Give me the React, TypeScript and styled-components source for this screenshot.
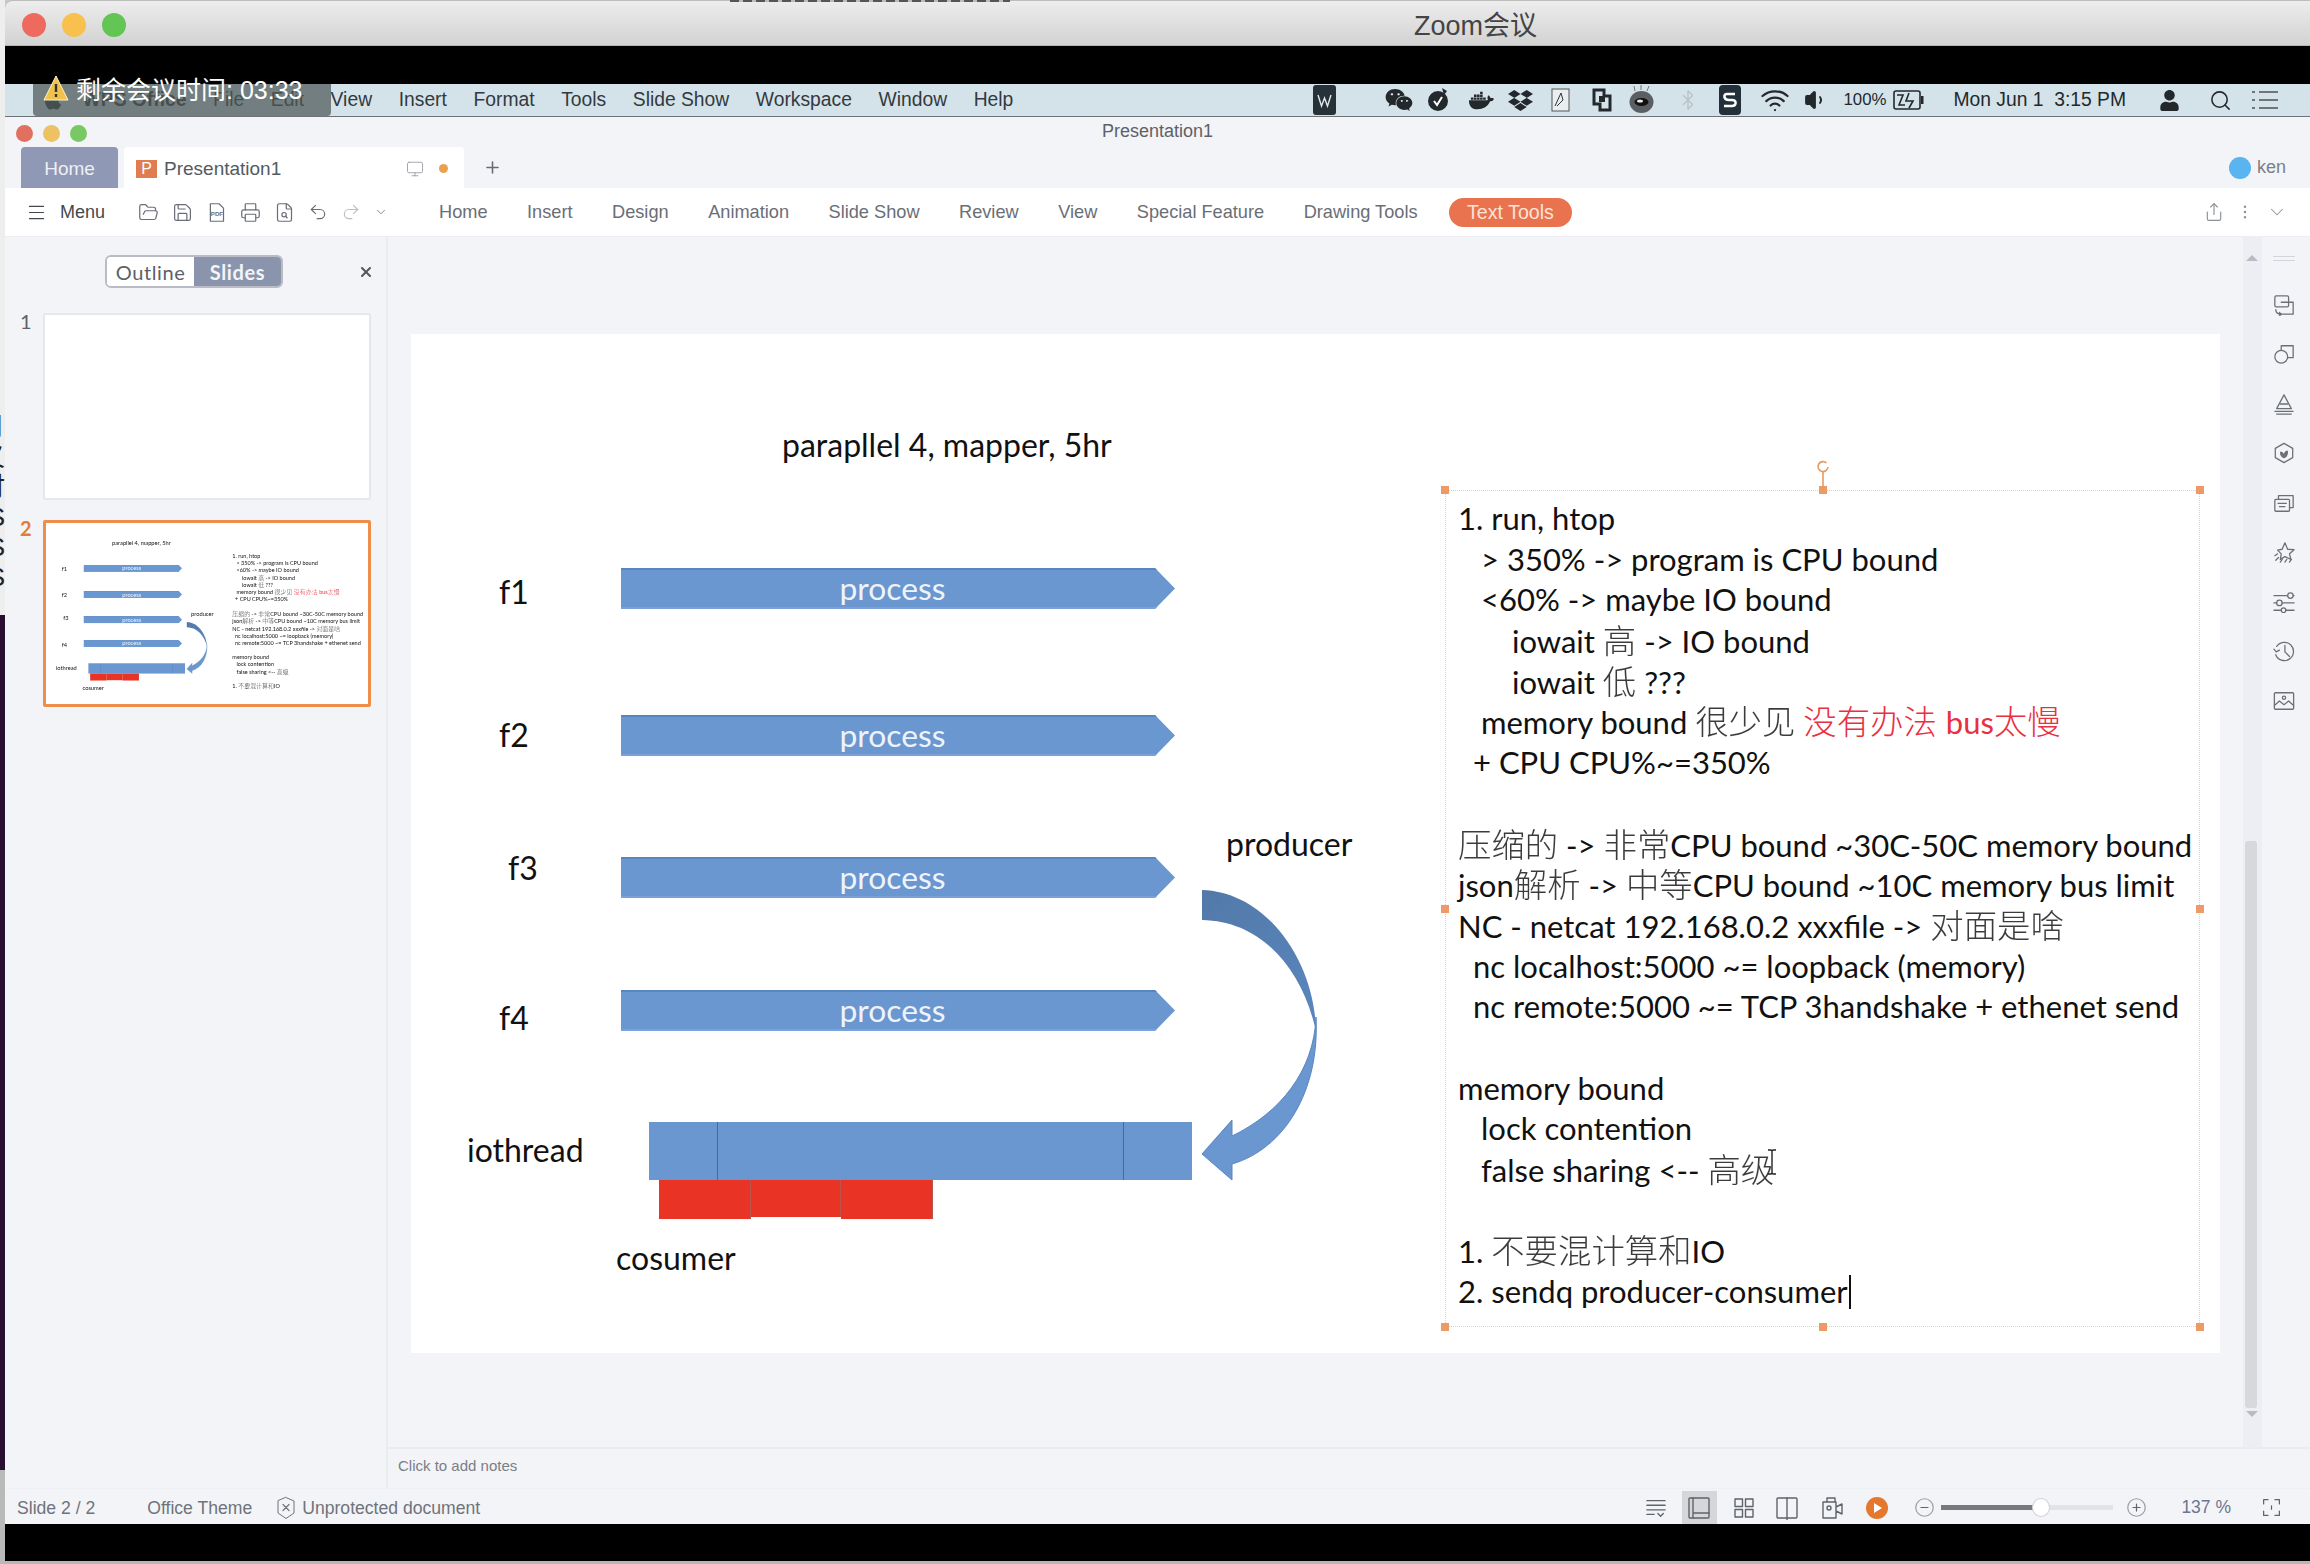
import React from 'react'
import styled, { createGlobalStyle } from 'styled-components'
import { FaWeixin, FaDocker, FaDropbox, FaUser, FaApple } from 'react-icons/fa'
import {
  Menu as MenuIcon,
  FolderOpen,
  Save,
  Printer,
  FileSearch,
  Undo2,
  Redo2,
  Monitor,
  Plus,
  Share,
  ChevronDown,
  EllipsisVertical,
  X,
  Wifi,
  Volume1,
  Search,
  Bluetooth,
} from 'lucide-react'

const UI_FONT = '"Liberation Sans", "Noto Sans CJK SC", sans-serif'
const SLIDE_FONT = 'Lato, "Noto Sans CJK SC", sans-serif'

const GlobalStyle = createGlobalStyle`
  html, body { margin: 0; padding: 0; background: #000; }
  * { box-sizing: border-box; }
`

const Page = styled.div`
  display: flex;
  width: 2310px;
  height: 1564px;
  overflow: hidden;
  background: #c8c8c8;
  font-family: ${UI_FONT};
`

/* sliver of the desktop behind the zoom window */
const Desktop = styled.div`
  display: flex;
  flex-direction: column;
  width: 5px;
  flex: none;
`
const DesktopLight = styled.div`
  height: 615px;
  padding-top: 412px;
  background: #eeeeee;
  overflow: hidden;
`
const DesktopGlyphs = styled.div`
  margin-left: -25px;
  width: 30px;
  text-align: right;
  font-size: 26px;
  line-height: 30px;
  color: #222;
`
const DesktopDark = styled.div`
  flex: 1;
  background: #2b0f33;
`
const DesktopGray = styled.div`
  height: 94px;
  background: #b9b9b9;
`

const ZoomWindow = styled.div`
  position: relative;
  flex: 1;
  display: flex;
  flex-direction: column;
  min-width: 0;
`
const DesktopSliver = styled.div`
  position: absolute;
  top: 0;
  left: 725px;
  width: 280px;
  height: 2px;
  background: repeating-linear-gradient(90deg, #555 0 9px, #bbb 9px 13px);
`
const TitleBar = styled.div`
  display: flex;
  align-items: center;
  height: 46px;
  padding-top: 3px;
  padding-left: 17px;
  background: linear-gradient(#ededed, #d2d2d2);
  border-top: 1px solid #bdbdbd;
  border-bottom: 1px solid #b4b4b4;
  border-top-left-radius: 8px;
`
const Lights = styled.div<{ $gap: number }>`
  display: flex;
  gap: ${(p) => p.$gap}px;
`
const Light = styled.span<{ $c: string; $d: number }>`
  width: ${(p) => p.$d}px;
  height: ${(p) => p.$d}px;
  border-radius: 50%;
  background: ${(p) => p.$c};
`
const ZoomTitle = styled.div`
  margin-left: 1288px;
  margin-top: -3px;
  font-size: 27px;
  color: #444;
`
const BlackBand = styled.div<{ $h: number }>`
  height: ${(p) => p.$h}px;
  background: #000;
  flex: none;
`
const BottomEdge = styled.div`
  height: 3px;
  flex: none;
  background: #b7b7b7;
`
const MacMenuBar = styled.div`
  position: relative;
  display: flex;
  align-items: center;
  height: 32px;
  flex: none;
  background: #d4e3e9;
  font-size: 19.3px;
  color: #33393f;
`
const MacMenus = styled.div`
  display: flex;
  gap: 26.6px;
  padding-left: 37px;
`
const AppName = styled.span`
  font-weight: 700;
  margin-left: -8px;
`
const Tray = styled.div`
  position: absolute;
  top: 0;
  bottom: 0;
  left: 0;
  right: 0;
  display: flex;
  align-items: center;
  justify-content: flex-end;
  padding-right: 32px;
  color: #23282c;
`
const TraySlot = styled.span<{ $ml: number; $small?: boolean }>`
  display: flex;
  align-items: center;
  margin-left: ${(p) => p.$ml}px;
  font-size: ${(p) => (p.$small ? '16.8px' : 'inherit')};
`
const TimerBadge = styled.div`
  position: absolute;
  left: 28px;
  top: 0;
  width: 298px;
  height: 32px;
  background: rgba(78, 88, 88, 0.72);
  border-radius: 0 0 4px 4px;
`
const TimerText = styled.div`
  position: absolute;
  left: 38px;
  top: -14px;
  display: flex;
  align-items: center;
  gap: 7px;
  color: #fff;
  font-size: 25px;
  white-space: nowrap;
`

const AppWindow = styled.div`
  flex: 1;
  display: flex;
  flex-direction: column;
  min-height: 0;
  background: #f3f4f7;
  border-top: 1px solid #6d7478;
`
const AppTitleRow = styled.div`
  position: relative;
  display: flex;
  align-items: center;
  height: 30px;
  flex: none;
  padding-left: 11px;
  padding-top: 2px;
`
const AppTitle = styled.div`
  position: absolute;
  left: 0;
  right: 0;
  top: 4px;
  text-align: center;
  font-size: 18px;
  color: #5d6168;
`
const TabRow = styled.div`
  display: flex;
  align-items: stretch;
  height: 41px;
  flex: none;
  padding-left: 16px;
`
const HomeTab = styled.div`
  display: flex;
  align-items: center;
  justify-content: center;
  width: 97px;
  padding-top: 2px;
  background: #8f98b4;
  color: #eef0f5;
  font-size: 19px;
  border-radius: 4px 4px 0 0;
`
const DocTab = styled.div`
  display: flex;
  align-items: center;
  width: 340px;
  margin-left: 6px;
  padding: 2px 0 0 12px;
  background: #fff;
  color: #555a62;
  font-size: 19px;
  border-radius: 4px 4px 0 0;
`
const DocIcon = styled.span`
  display: flex;
  align-items: center;
  justify-content: center;
  width: 21px;
  height: 18px;
  margin-right: 7px;
  background: #e07c50;
  color: #fff;
  font-size: 16px;
`
const DocSpacer = styled.span`
  flex: 1;
`
const DocDot = styled.span`
  width: 9px;
  height: 9px;
  margin: 0 16px 0 15px;
  border-radius: 50%;
  background: #eba04f;
`
const AddTab = styled.div`
  display: flex;
  align-items: center;
  margin-left: 19px;
  color: #666b74;
`
const UserChip = styled.div`
  display: flex;
  align-items: center;
  gap: 6px;
  margin-left: auto;
  padding-right: 24px;
  font-size: 18px;
  color: #7a7f88;
`
const Avatar = styled.span`
  width: 22px;
  height: 22px;
  border-radius: 50%;
  background: #5ab4ef;
`

const Toolbar = styled.div`
  position: relative;
  display: flex;
  align-items: center;
  height: 49px;
  flex: none;
  padding-left: 21px;
  background: #fff;
  border-bottom: 1px solid #eceef2;
  color: #6a6e76;
`
const MenuButton = styled.div`
  display: flex;
  align-items: center;
  gap: 13px;
  width: 112px;
  color: #444950;
  font-size: 18px;
`
const QuickIcons = styled.div`
  display: flex;
  align-items: center;
  gap: 13px;
  width: 301px;
`
const RibbonTabs = styled.div`
  display: flex;
  align-items: center;
  gap: 39.5px;
  font-size: 18.2px;
`
const RibbonPill = styled.span`
  display: flex;
  align-items: center;
  height: 29px;
  padding: 0 18px;
  margin-left: -8px;
  border-radius: 15px;
  background: #e8734e;
  color: #fbe3da;
  font-size: 19.6px;
`
const ToolbarEnd = styled.div`
  display: flex;
  align-items: center;
  gap: 12px;
  margin-left: auto;
  padding-right: 22px;
  color: #8d9198;
`

const Body = styled.div`
  flex: 1;
  display: flex;
  min-height: 0;
`
const Sidebar = styled.div`
  width: 383px;
  flex: none;
  padding: 18px 0 0 17px;
  border-right: 2px solid #ebecf0;
`
const SidebarTop = styled.div`
  display: flex;
  align-items: center;
  margin-bottom: 25px;
  padding-left: 83px;
  color: #555;
`
const ViewToggle = styled.div`
  display: flex;
  width: 178px;
  height: 33px;
  border: 2px solid #b9bcc4;
  border-radius: 6px;
  overflow: hidden;
  font-family: Lato, sans-serif;
  font-size: 20px;
  letter-spacing: 0.6px;
`
const ToggleItem = styled.div<{ $active?: boolean }>`
  flex: 1;
  display: flex;
  align-items: center;
  justify-content: center;
  background: ${(p) => (p.$active ? '#8a94ad' : '#fff')};
  color: ${(p) => (p.$active ? '#f2f4f8' : '#5c6068')};
  font-weight: ${(p) => (p.$active ? 700 : 400)};
`
const SidebarClose = styled.div`
  display: flex;
  margin-left: 75px;
`
const ThumbRow = styled.div`
  display: flex;
  margin-bottom: 20px;
`
const ThumbNumber = styled.div<{ $active?: boolean }>`
  width: 21px;
  margin-top: -3px;
  text-indent: -2px;
  font-family: Lato, sans-serif;
  font-size: 20px;
  line-height: 22px;
  color: ${(p) => (p.$active ? '#e07c3c' : '#5e626a')};
  font-weight: ${(p) => (p.$active ? 700 : 400)};
`
const ThumbFrame = styled.div<{ $active?: boolean }>`
  position: relative;
  width: 328px;
  height: 187px;
  background: #fff;
  overflow: hidden;
  border: ${(p) => (p.$active ? '3px solid #ed8e4a' : '2px solid #e6e7ea')};
  border-radius: 2px;
`
const ThumbScale = styled.div`
  width: 1809px;
  transform: scale(0.178);
  transform-origin: 0 0;
  filter: blur(1.5px);
`

const Main = styled.div`
  flex: 1;
  display: flex;
  flex-direction: column;
  min-width: 0;
`
const CanvasRow = styled.div`
  flex: 1;
  display: flex;
  min-height: 0;
`
const Canvas = styled.div`
  flex: 1;
  padding: 97px 0 0 23px;
  min-width: 0;
`
const Slide = styled.div`
  position: relative;
  width: 1809px;
  height: 1019px;
  background: #fff;
  font-family: ${SLIDE_FONT};
  color: #111;
`
const Scrollbar = styled.div`
  position: relative;
  width: 19px;
  flex: none;
  background: #eceef3;
`
const ScrollArrow = styled.div<{ $down?: boolean }>`
  position: absolute;
  left: 3px;
  ${(p) => (p.$down ? 'bottom: 30px;' : 'top: 18px;')}
  width: 0;
  height: 0;
  border-left: 6px solid transparent;
  border-right: 6px solid transparent;
  ${(p) =>
    p.$down ? 'border-top: 6px solid #b9bbc2;' : 'border-bottom: 6px solid #b9bbc2;'}
`
const ScrollThumb = styled.div`
  position: absolute;
  left: 2px;
  top: 604px;
  width: 12px;
  height: 567px;
  border-radius: 3px;
  background: #d7d8dc;
`
const Rail = styled.div`
  width: 48px;
  flex: none;
  display: flex;
  flex-direction: column;
  align-items: center;
  gap: 27.5px;
  padding: 19px 4px 0 0;
  color: #6c7076;
`
const RailGrip = styled.div`
  width: 22px;
  height: 5px;
  margin-bottom: 5px;
  border-top: 1px solid #d3d5da;
  border-bottom: 1px solid #d3d5da;
`
const NotesRow = styled.div`
  display: flex;
  align-items: center;
  height: 41px;
  flex: none;
  padding: 0 0 7px 10px;
  border-top: 2px solid #ebecf0;
  font-size: 15px;
  color: #7a7e86;
`

const StatusBar = styled.div`
  display: flex;
  align-items: center;
  height: 36px;
  flex: none;
  padding-left: 12px;
  border-top: 1px solid #eef0f3;
  font-size: 17.6px;
  color: #6f737b;
`
const StatusText = styled.span`
  padding-top: 3px;
`
const StatusTheme = styled(StatusText)`
  margin-left: 52px;
`
const StatusProtect = styled.span`
  display: flex;
  align-items: center;
  gap: 4px;
  margin-left: 22px;
  padding-top: 3px;
`
const StatusTools = styled.div`
  display: flex;
  align-items: center;
  align-self: stretch;
  margin-left: auto;
  padding: 2px 28px 0 0;
  color: #5f636a;
`
const ViewSlot = styled.span<{ $on?: boolean; $ml?: number; $w?: number }>`
  display: flex;
  align-items: center;
  justify-content: center;
  align-self: stretch;
  width: ${(p) => p.$w ?? 35}px;
  margin-left: ${(p) => p.$ml ?? 0}px;
  background: ${(p) => (p.$on ? '#d5d6da' : 'transparent')};
`
const ZoomSlider = styled.div`
  position: relative;
  width: 172px;
  height: 5px;
  margin: 0 13px 0 3px;
  background: #e2e3e6;
`
const ZoomFill = styled.div`
  width: 100px;
  height: 100%;
  background: #77797e;
`
const ZoomKnob = styled.div`
  position: absolute;
  left: 91px;
  top: -7px;
  width: 18px;
  height: 19px;
  border-radius: 50%;
  background: #fff;
  border: 1px solid #d0d1d5;
`
const ZoomPercent = styled.span`
  margin: 0 30px 0 34px;
  font-size: 17.5px;
  color: #6d7590;
`

/* slide items sit on a free canvas, placed by slide coordinates */
const SlideLabel = styled.div<{ $x: number; $y: number }>`
  position: absolute;
  left: ${(p) => p.$x}px;
  top: ${(p) => p.$y - 21}px;
  line-height: 40px;
  font-size: 32px;
  white-space: nowrap;
`
const ProcessArrow = styled.div<{ $y: number }>`
  position: absolute;
  left: 210px;
  top: ${(p) => p.$y}px;
  width: 554px;
  height: 41px;
  display: flex;
  align-items: center;
  justify-content: center;
  padding: 0 11px 2px 0;
  background: #6a97d0;
  box-shadow: inset 0 2px 0 #5a86c0, inset 0 -2px 0 #7ba2d6;
  clip-path: polygon(0 0, 534px 0, 100% 50%, 534px 100%, 0 100%);
  color: #eef3fb;
  font-size: 31.8px;
`
const IoBar = styled.div`
  position: absolute;
  left: 238px;
  top: 788px;
  width: 543px;
  height: 58px;
  background: #6a97d0;
`
const IoDivider = styled.div<{ $x: number }>`
  position: absolute;
  left: ${(p) => p.$x}px;
  top: 0;
  width: 1px;
  height: 100%;
  background: #44699a;
`
const RedBlock = styled.div<{ $x: number; $w: number; $h: number }>`
  position: absolute;
  left: ${(p) => p.$x}px;
  top: 845px;
  width: ${(p) => p.$w}px;
  height: ${(p) => p.$h}px;
  background: #e93325;
  box-shadow: inset -1px 0 0 #b8564c;
`
const CurveSvg = styled.svg`
  position: absolute;
  left: 785px;
  top: 550px;
`
const TextBox = styled.div`
  position: absolute;
  left: 1034px;
  top: 156px;
  width: 755px;
  height: 837px;
  padding: 8px 0 0 13px;
  font-size: 31px;
  line-height: 40.7px;
`
const SelectionBorder = styled.div`
  position: absolute;
  inset: 0;
  border: 1px dotted #f3c9ac;
`
const Handle = styled.span<{ $x: number; $y: number }>`
  position: absolute;
  left: calc(${(p) => p.$x}% - 4px);
  top: calc(${(p) => p.$y}% - 4px);
  width: 8px;
  height: 8px;
  background: #ee9a68;
`
const RotateHandle = styled.div`
  position: absolute;
  left: 50%;
  top: -31px;
  margin-left: -7px;
  color: #e59a5f;
`
const TextLine = styled.div<{ $indent?: number }>`
  height: 40.7px;
  padding-left: ${(p) => p.$indent ?? 0}px;
  white-space: nowrap;
`
const Cjk = styled.span`
  font-size: 33.4px;
  font-weight: 300;
  opacity: 0.82;
`
const Red = styled.span`
  color: #e9303f;
  ${Cjk} {
    opacity: 1;
    margin-right: 1px;
  }
`
const Caret = styled.span`
  display: inline-block;
  width: 2px;
  height: 34px;
  margin-left: 1px;
  vertical-align: -6px;
  background: #111;
`
const IBeam = styled.svg`
  position: absolute;
  left: 1355px;
  top: 815px;
`

/* the reference sets Chinese a size up from the latin around it */
const mixed = (text: string) =>
  text
    .split(/([\u4e00-\u9fff]+)/)
    .map((part, i) => (i % 2 ? <Cjk key={i}>{part}</Cjk> : part))

const TEXT_LINES: { t: React.ReactNode; i?: number }[] = [
  { t: '1. run, htop' },
  { t: '> 350% -> program is CPU bound', i: 23 },
  { t: '<60% -> maybe IO bound', i: 23 },
  { t: mixed('iowait 高 -> IO bound'), i: 54 },
  { t: mixed('iowait 低 ???'), i: 54 },
  { t: <>{mixed('memory bound 很少见 ')}<Red>{mixed('没有办法 bus太慢')}</Red></>, i: 23 },
  { t: '+ CPU CPU%~=350%', i: 15 },
  { t: '' },
  { t: mixed('压缩的 -> 非常CPU bound ~30C-50C memory bound') },
  { t: mixed('json解析 -> 中等CPU bound ~10C memory bus limit') },
  { t: mixed('NC - netcat 192.168.0.2 xxxfile -> 对面是啥') },
  { t: 'nc localhost:5000 ~= loopback (memory)', i: 15 },
  { t: 'nc remote:5000 ~= TCP 3handshake + ethenet send', i: 15 },
  { t: '' },
  { t: 'memory bound' },
  { t: 'lock contention', i: 23 },
  { t: mixed('false sharing <-- 高级'), i: 23 },
  { t: '' },
  { t: mixed('1. 不要混计算和IO') },
]

const HANDLES = [
  [0, 0],
  [50, 0],
  [100, 0],
  [0, 50],
  [100, 50],
  [0, 100],
  [50, 100],
  [100, 100],
]

const SlideBody = ({ preview }: { preview?: boolean }) => (
  <Slide>
    <SlideLabel $x={371} $y={112}>parapllel 4, mapper, 5hr</SlideLabel>
    <SlideLabel $x={88} $y={259}>f1</SlideLabel>
    <SlideLabel $x={88} $y={402}>f2</SlideLabel>
    <SlideLabel $x={97} $y={535}>f3</SlideLabel>
    <SlideLabel $x={88} $y={685}>f4</SlideLabel>
    <SlideLabel $x={56} $y={817}>iothread</SlideLabel>
    <SlideLabel $x={205} $y={925}>cosumer</SlideLabel>
    <SlideLabel $x={815} $y={511}>producer</SlideLabel>
    {[234, 381, 523, 656].map((y) => (
      <ProcessArrow key={y} $y={y}>process</ProcessArrow>
    ))}
    <RedBlock $x={248} $w={92} $h={40} />
    <RedBlock $x={340} $w={90} $h={38} />
    <RedBlock $x={430} $w={92} $h={40} />
    <IoBar>
      <IoDivider $x={68} />
      <IoDivider $x={474} />
    </IoBar>
    <CurveSvg width="132" height="305" viewBox="1196 883 132 305">
      <defs>
        <linearGradient id={preview ? 'backP' : 'back'} x1="0" y1="0" x2="1" y2="1">
          <stop offset="0" stopColor="#5279a8" />
          <stop offset="1" stopColor="#5a86bd" />
        </linearGradient>
      </defs>
      <path
        d="M1202 889 C1268 891 1315 962 1316 1030 C1302 968 1262 920 1202 919 Z"
        fill={`url(#${preview ? 'backP' : 'back'})`}
      />
      <path
        d="M1316 1016 C1320 1090 1284 1148 1232 1163 L1232 1179 L1202 1153 L1232 1119 L1232 1135 C1280 1112 1314 1070 1316 1016 Z"
        fill="#6a97d0"
        stroke="#5a86c0"
        strokeWidth="1"
      />
    </CurveSvg>
    <TextBox>
      {!preview && (
        <>
          <SelectionBorder />
          {HANDLES.map(([x, y]) => (
            <Handle key={`${x}-${y}`} $x={x} $y={y} />
          ))}
          <RotateHandle>
            <svg width="14" height="32" viewBox="0 0 14 32" fill="none" stroke="currentColor" strokeWidth="1.6">
              <path d="M10.5 4 A5 5 0 1 0 12 8" />
              <path d="M7 13 V32" />
            </svg>
          </RotateHandle>
        </>
      )}
      {TEXT_LINES.map((l, i) => (
        <TextLine key={i} $indent={l.i}>{l.t}</TextLine>
      ))}
      {!preview && (
        <TextLine>
          2. sendq producer-consumer
          <Caret />
        </TextLine>
      )}
    </TextBox>
    {!preview && (
      <IBeam width="12" height="26" viewBox="0 0 12 26" fill="none" stroke="#222" strokeWidth="1.4">
        <path d="M2 1 H5 L6 2 L7 1 H10 M6 2 V24 M2 25 H5 L6 24 L7 25 H10" />
      </IBeam>
    )}
  </Slide>
)

const stroke = { strokeWidth: 1.4 }

const OutlineIcon = ({ children, size = 24 }: { children: React.ReactNode; size?: number }) => (
  <svg width={size} height={size} viewBox="0 0 24 24" fill="none" stroke="currentColor" strokeWidth="1.4" strokeLinecap="round" strokeLinejoin="round">
    {children}
  </svg>
)

const RAIL_ICONS = [
  <><rect x="2" y="2" width="15" height="12" rx="1.5" /><path d="M9 9 H22 V22 H7" /><path d="M3 17 c0 3 2 5 6 5 M7 20 l2 2 -2 2" /></>,
  <><path d="M9 8 V3 H22 V16 H16" /><circle cx="9" cy="15" r="7" /></>,
  <><path d="M4 17 L12 2 L20 17 Z" /><path d="M8 12 H16" /><path d="M2 20 H22 M4 23 H20" /></>,
  <><path d="M12 1.5 L21.5 7 V17 L12 22.5 L2.5 17 V7 Z" /><path d="M12 17 C9 16 8 13 8.5 11 C11 11.5 12 14 12 17 C12 13 13.5 10.5 15.5 10 C16 13 15 16 12 17 Z" fill="currentColor" /></>,
  <><rect x="2" y="8" width="16" height="13" rx="1" /><path d="M6 8 V4 H22 V17 H18" /><path d="M5.5 12.5 H14.5 M7 16 H13" /></>,
  <><path d="M13 2 L16 9 L23 9.5 L18 14 L19.5 20 L13 17 L8 20 L9 14 L5 10 L10 9 Z" /><path d="M2 16 L5 14 M3 21 L6 18 M8 23 L10 20 M13 23 L15 20 M18 23 L20 20" /></>,
  <><path d="M1 5 H16 M22 5 H23 M1 13 H4 M10 13 H23 M1 21 H9 M14 21 H23" /><circle cx="19" cy="5" r="3" /><circle cx="7" cy="13" r="3" /><circle cx="11.5" cy="21" r="2.5" /></>,
  <><path d="M4 7 A10 10 0 1 1 3 16" /><path d="M1 10 L3.5 13 L7 11" /><path d="M13 6 V13 L18 18" /></>,
  <><rect x="1.5" y="3" width="21" height="18" rx="1" /><circle cx="12" cy="8.5" r="1.8" /><path d="M1.5 17 L7 12 L12 16 L17 12 L22.5 17" /></>,
]

export default function App() {
  return (
    <Page>
      <GlobalStyle />
      <Desktop>
        <DesktopLight>
          <DesktopGlyphs>
            <div>月</div>
            <div>义</div>
            <div>时</div>
            <div>S</div>
            <div>S</div>
            <div>S</div>
          </DesktopGlyphs>
        </DesktopLight>
        <DesktopDark />
        <DesktopGray />
      </Desktop>
      <ZoomWindow>
        <DesktopSliver />
        <TitleBar>
          <Lights $gap={16}>
            <Light $c="#ee6a5f" $d={24} />
            <Light $c="#f8c14d" $d={24} />
            <Light $c="#62c554" $d={24} />
          </Lights>
          <ZoomTitle>Zoom会议</ZoomTitle>
        </TitleBar>
        <BlackBand $h={38} />
        <MacMenuBar>
          <MacMenus>
            <FaApple size={22} />
            <AppName>WPS Office</AppName>
            <span>File</span>
            <span>Edit</span>
            <span>View</span>
            <span>Insert</span>
            <span>Format</span>
            <span>Tools</span>
            <span>Slide Show</span>
            <span>Workspace</span>
            <span>Window</span>
            <span>Help</span>
          </MacMenus>
          <Tray>
            <TraySlot $ml={0}>
              <svg width="23" height="30" viewBox="0 0 23 30"><rect width="23" height="30" rx="3" fill="#263238" /><path d="M5 10 L8.5 21 L11.5 13 L14.5 21 L18 10" fill="none" stroke="#dfe6ea" strokeWidth="1.4" /></svg>
            </TraySlot>
            <TraySlot $ml={49}><FaWeixin size={28} /></TraySlot>
            <TraySlot $ml={15}>
              <svg width="20" height="26" viewBox="0 0 20 26"><circle cx="10" cy="14" r="10" fill="#23282c" /><path d="M6 14 L9 18 L14 10" fill="none" stroke="#fff" strokeWidth="2" /><path d="M14 1 L19 4 L16 8 Z" fill="#23282c" /></svg>
            </TraySlot>
            <TraySlot $ml={21}><FaDocker size={25} /></TraySlot>
            <TraySlot $ml={14}><FaDropbox size={25} /></TraySlot>
            <TraySlot $ml={18}>
              <svg width="19" height="24" viewBox="0 0 19 24"><rect x="1" y="1" width="17" height="22" fill="#e9eef0" stroke="#555" /><path d="M4 18 L10 5 L12 12 L6 18" fill="none" stroke="#333" /></svg>
            </TraySlot>
            <TraySlot $ml={22}>
              <svg width="20" height="24" viewBox="0 0 20 24"><path d="M2 2 H12 V8 H18 V22 H8 V16 H2 Z" fill="none" stroke="#23282c" strokeWidth="3" /><path d="M7 8 H13 V14 H7 Z" fill="#23282c" /></svg>
            </TraySlot>
            <TraySlot $ml={17}>
              <svg width="25" height="30" viewBox="0 0 25 30"><path d="M6 6 L5 1 M12 5 V0 M18 6 L20 1" stroke="#777" /><ellipse cx="12.5" cy="17" rx="12" ry="11" fill="#5a5f63" /><ellipse cx="12.5" cy="17" rx="7" ry="4" fill="#111" /><ellipse cx="11" cy="16" rx="3" ry="1.6" fill="#eee" /></svg>
            </TraySlot>
            <TraySlot $ml={23}><Bluetooth size={22} color="#b9c3c8" strokeWidth={1.5} /></TraySlot>
            <TraySlot $ml={20}>
              <svg width="22" height="30" viewBox="0 0 22 30"><rect width="22" height="30" rx="4" fill="#23303a" /><path d="M16 9 H8 Q5 9 5.5 12 Q6 15 10 15 H13 Q17 15 16.5 18.5 Q16 21 13 21 H5" fill="none" stroke="#fff" strokeWidth="2.6" /></svg>
            </TraySlot>
            <TraySlot $ml={19}><Wifi size={30} strokeWidth={1.8} /></TraySlot>
            <TraySlot $ml={14}><Volume1 size={24} fill="currentColor" strokeWidth={1.8} /></TraySlot>
            <TraySlot $ml={16} $small>100%</TraySlot>
            <TraySlot $ml={7}>
              <svg width="31" height="20" viewBox="0 0 31 20"><rect x="1" y="1" width="26" height="18" rx="2" fill="none" stroke="#23282c" strokeWidth="1.6" /><rect x="28" y="6" width="2.5" height="8" fill="#23282c" /><path d="M4 5 H10 L6 15 H12 M16 3 L13 11 H20 L16 18" fill="none" stroke="#23282c" strokeWidth="1.6" /></svg>
            </TraySlot>
            <TraySlot $ml={29}>Mon Jun 1&nbsp; 3:15 PM</TraySlot>
            <TraySlot $ml={33}><FaUser size={21} /></TraySlot>
            <TraySlot $ml={29}><Search size={23} strokeWidth={1.6} /></TraySlot>
            <TraySlot $ml={20}>
              <svg width="26" height="22" viewBox="0 0 26 22" stroke="#6f7579" strokeWidth="1.8"><path d="M0 3 H3 M7 3 H26 M0 11 H3 M7 11 H26 M0 19 H3 M7 19 H26" /></svg>
            </TraySlot>
          </Tray>
          <TimerBadge />
          <TimerText>
            <svg width="26" height="26" viewBox="0 0 26 26"><path d="M13 1 L25 25 H1 Z" fill="#f0c24b" stroke="#fff3c8" strokeWidth="1" /><path d="M13 9 V17 M13 19 V22" stroke="#333" strokeWidth="2.4" /></svg>
            <span>剩余会议时间: 03:33</span>
          </TimerText>
        </MacMenuBar>
        <AppWindow>
          <AppTitleRow>
            <Lights $gap={10}>
              <Light $c="#e0705f" $d={17} />
              <Light $c="#eec162" $d={17} />
              <Light $c="#78c865" $d={17} />
            </Lights>
            <AppTitle>Presentation1</AppTitle>
          </AppTitleRow>
          <TabRow>
            <HomeTab>Home</HomeTab>
            <DocTab>
              <DocIcon>P</DocIcon>
              Presentation1
              <DocSpacer />
              <Monitor size={18} strokeWidth={1.2} color="#9a9ea6" />
              <DocDot />
            </DocTab>
            <AddTab><Plus size={19} strokeWidth={2} /></AddTab>
            <UserChip><Avatar />ken</UserChip>
          </TabRow>
          <Toolbar>
            <MenuButton>
              <MenuIcon size={21} strokeWidth={1.4} />
              Menu
            </MenuButton>
            <QuickIcons>
              <FolderOpen size={21} {...stroke} />
              <Save size={21} {...stroke} />
              <OutlineIcon size={21}>
                <path d="M5 2 H15 L20 7 V22 H5 Z" />
                <text x="12.5" y="16" fontSize="7" textAnchor="middle" stroke="none" fill="currentColor" fontWeight="700">PDF</text>
              </OutlineIcon>
              <Printer size={21} {...stroke} />
              <FileSearch size={21} {...stroke} />
              <Undo2 size={20} {...stroke} />
              <Redo2 size={20} {...stroke} color="#bcbfc4" />
              <ChevronDown size={14} {...stroke} />
            </QuickIcons>
            <RibbonTabs>
              <span>Home</span>
              <span>Insert</span>
              <span>Design</span>
              <span>Animation</span>
              <span>Slide Show</span>
              <span>Review</span>
              <span>View</span>
              <span>Special Feature</span>
              <span>Drawing Tools</span>
              <RibbonPill>Text Tools</RibbonPill>
            </RibbonTabs>
            <ToolbarEnd>
              <Share size={20} {...stroke} />
              <EllipsisVertical size={18} {...stroke} />
              <ChevronDown size={22} strokeWidth={1.1} />
            </ToolbarEnd>
          </Toolbar>
          <Body>
            <Sidebar>
              <SidebarTop>
                <ViewToggle>
                  <ToggleItem>Outline</ToggleItem>
                  <ToggleItem $active>Slides</ToggleItem>
                </ViewToggle>
                <SidebarClose><X size={16} strokeWidth={3} /></SidebarClose>
              </SidebarTop>
              <ThumbRow>
                <ThumbNumber>1</ThumbNumber>
                <ThumbFrame />
              </ThumbRow>
              <ThumbRow>
                <ThumbNumber $active>2</ThumbNumber>
                <ThumbFrame $active>
                  <ThumbScale><SlideBody preview /></ThumbScale>
                </ThumbFrame>
              </ThumbRow>
            </Sidebar>
            <Main>
              <CanvasRow>
                <Canvas><SlideBody /></Canvas>
                <Scrollbar>
                  <ScrollArrow />
                  <ScrollThumb />
                  <ScrollArrow $down />
                </Scrollbar>
                <Rail>
                  <RailGrip />
                  {RAIL_ICONS.map((icon, i) => (
                    <OutlineIcon key={i} size={22}>{icon}</OutlineIcon>
                  ))}
                </Rail>
              </CanvasRow>
              <NotesRow>Click to add notes</NotesRow>
            </Main>
          </Body>
          <StatusBar>
            <StatusText>Slide 2 / 2</StatusText>
            <StatusTheme>Office Theme</StatusTheme>
            <StatusProtect>
              <OutlineIcon size={24}>
                <path d="M12 1.5 L20 5 V17 L12 22.5 L4 17 V5 Z" strokeWidth="1" />
                <path d="M9 8.5 L15 14.5 M15 8.5 L9 14.5" strokeWidth="1.2" />
              </OutlineIcon>
              Unprotected document
            </StatusProtect>
            <StatusTools>
              <ViewSlot>
                <OutlineIcon size={22}><path d="M2 4 H22 M2 9 H22 M2 14 H22 M2 19 H10 M14 18 L17 21 L20 18" /></OutlineIcon>
              </ViewSlot>
              <ViewSlot $on $ml={8.5}>
                <OutlineIcon size={24}><rect x="2" y="2" width="20" height="20" rx="1" /><path d="M6 2 V22 M6 17 H22" /></OutlineIcon>
              </ViewSlot>
              <ViewSlot $ml={9.5}>
                <OutlineIcon size={24}><rect x="3" y="3" width="7.5" height="7.5" /><rect x="13.5" y="3" width="7.5" height="7.5" /><rect x="3" y="13.5" width="7.5" height="7.5" /><rect x="13.5" y="13.5" width="7.5" height="7.5" /></OutlineIcon>
              </ViewSlot>
              <ViewSlot $ml={8}>
                <OutlineIcon size={24}><rect x="2" y="2" width="20" height="20" rx="1" /><path d="M12 2 V24" /></OutlineIcon>
              </ViewSlot>
              <ViewSlot $ml={10}>
                <OutlineIcon size={24}><path d="M7 6 V2 H15 V6 M3 6 H16 V22 H3 Z M16 11 L22 8 V18 L16 15" /><circle cx="9" cy="12" r="2" /></OutlineIcon>
              </ViewSlot>
              <ViewSlot $ml={10}>
                <svg width="22" height="22" viewBox="0 0 22 22"><circle cx="11" cy="11" r="11" fill="#e4782f" /><path d="M8 6 L16 11 L8 16 Z" fill="#fff" /></svg>
              </ViewSlot>
              <ViewSlot $ml={16} $w={28}>
                <OutlineIcon size={21}><circle cx="12" cy="12" r="10" stroke="#9b9ea4" /><path d="M8 12 H16" /></OutlineIcon>
              </ViewSlot>
              <ZoomSlider>
                <ZoomFill />
                <ZoomKnob />
              </ZoomSlider>
              <OutlineIcon size={21}><circle cx="12" cy="12" r="10" stroke="#9b9ea4" /><path d="M8 12 H16 M12 8 V16" /></OutlineIcon>
              <ZoomPercent>137 %</ZoomPercent>
              <OutlineIcon size={21}><path d="M3 8 V3 H8 M16 3 H21 V8 M21 16 V21 H16 M8 21 H3 V16" /><path d="M12 10 V14" /></OutlineIcon>
            </StatusTools>
          </StatusBar>
        </AppWindow>
        <BlackBand $h={37} />
        <BottomEdge />
      </ZoomWindow>
    </Page>
  )
}
